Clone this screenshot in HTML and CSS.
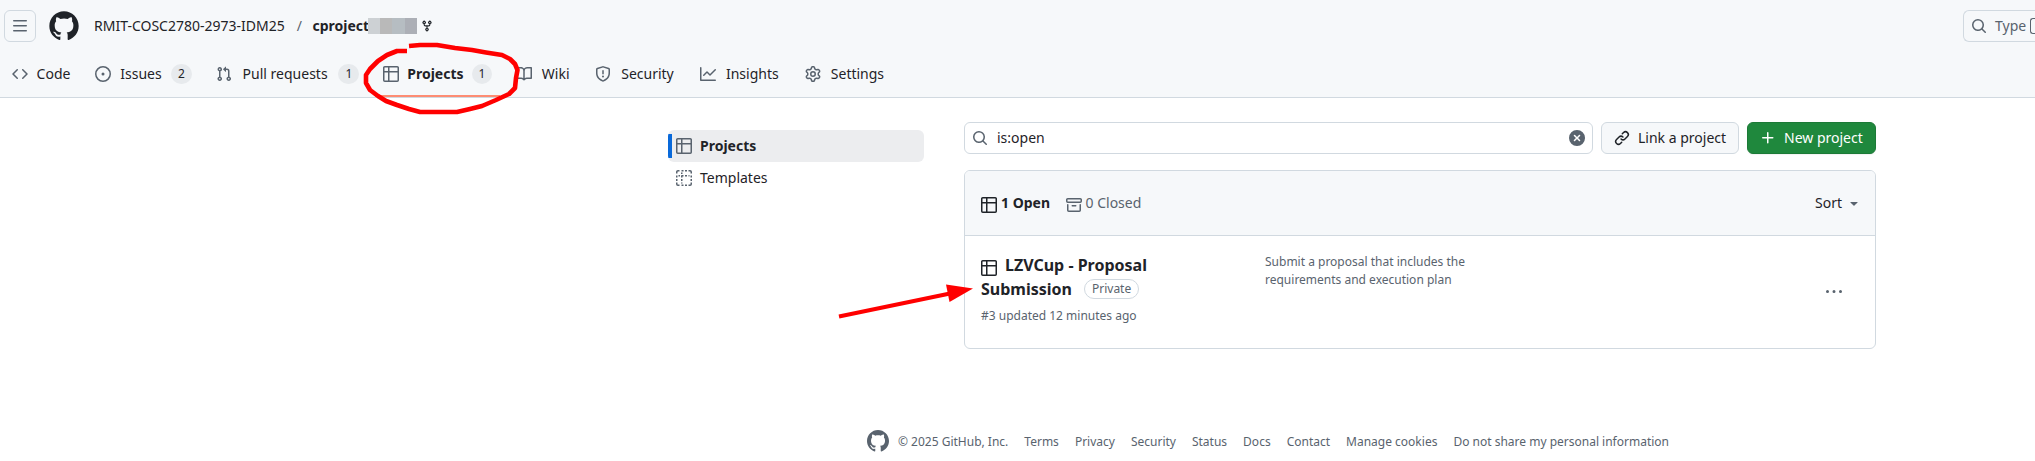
FILE: index.html
```html
<!DOCTYPE html>
<html lang="en">
<head>
<meta charset="utf-8">
<title>Projects</title>
<link rel="stylesheet" href="styles.css">
</head>
<body>
<svg class="sprite" aria-hidden="true">
  <symbol id="mark" viewBox="0 0 24 24"><path d="M12 1C5.9225 1 1 5.9225 1 12C1 16.8675 4.14875 20.9787 8.52125 22.4362C9.07125 22.5325 9.2775 22.2025 9.2775 21.9137C9.2775 21.6525 9.26375 20.7862 9.26375 19.865C6.5 20.3737 5.785 19.1912 5.565 18.5725C5.44125 18.2562 4.905 17.28 4.4375 17.0187C4.0525 16.8125 3.5025 16.3037 4.42375 16.29C5.29 16.2762 5.90875 17.0875 6.115 17.4175C7.105 19.0812 8.68625 18.6137 9.31875 18.325C9.415 17.61 9.70375 17.1287 10.02 16.8537C7.5725 16.5787 5.015 15.63 5.015 11.4225C5.015 10.2262 5.44125 9.23625 6.1425 8.46625C6.0325 8.19125 5.6475 7.06375 6.2525 5.55125C6.2525 5.55125 7.17375 5.2625 9.2775 6.67875C10.1575 6.43125 11.0925 6.3075 12.0275 6.3075C12.9625 6.3075 13.8975 6.43125 14.7775 6.67875C16.8813 5.24875 17.8025 5.55125 17.8025 5.55125C18.4075 7.06375 18.0225 8.19125 17.9125 8.46625C18.6138 9.23625 19.04 10.2125 19.04 11.4225C19.04 15.6437 16.4688 16.5787 14.0213 16.8537C14.42 17.1975 14.7638 17.8575 14.7638 18.8887C14.7638 20.36 14.75 21.5425 14.75 21.9137C14.75 22.2025 14.9563 22.5462 15.5063 22.4362C19.8513 20.9787 23 16.8537 23 12C23 5.9225 18.0775 1 12 1Z"/></symbol>
  <symbol id="table" viewBox="0 0 16 16"><path d="M0 1.75C0 .784.784 0 1.75 0h12.5C15.216 0 16 .784 16 1.75v12.5A1.75 1.75 0 0 1 14.25 16H1.75A1.75 1.75 0 0 1 0 14.25ZM6.5 6.5v8h7.75a.25.25 0 0 0 .25-.25V6.5Zm8-1.5V1.75a.25.25 0 0 0-.25-.25H6.5V5Zm-13 1.5v7.75c0 .138.112.25.25.25H5v-8ZM5 5V1.5H1.75a.25.25 0 0 0-.25.25V5Z"/></symbol>
  <symbol id="search" viewBox="0 0 16 16"><path d="M10.68 11.74a6 6 0 0 1-7.922-8.982 6 6 0 0 1 8.982 7.922l3.04 3.04a.749.749 0 0 1-.326 1.275.749.749 0 0 1-.734-.215ZM11.5 7a4.499 4.499 0 1 0-8.997 0A4.499 4.499 0 0 0 11.5 7Z"/></symbol>
</svg>

<header class="header">
  <div class="topbar">
    <button class="menu-btn"><svg class="icon" viewBox="0 0 16 16"><path d="M1 2.75A.75.75 0 0 1 1.75 2h12.5a.75.75 0 0 1 0 1.5H1.75A.75.75 0 0 1 1 2.75Zm0 5A.75.75 0 0 1 1.75 7h12.5a.75.75 0 0 1 0 1.5H1.75A.75.75 0 0 1 1 7.75ZM1.75 12h12.5a.75.75 0 0 1 0 1.5H1.75a.75.75 0 0 1 0-1.5Z"/></svg></button>
    <svg class="logo"><use href="#mark"/></svg>
    <div class="crumbs">
      <span>RMIT-COSC2780-2973-IDM25</span><span class="slash">/</span><b>cproject</b>
      <span class="mask"><i class="m1"></i><i class="m2"></i><i class="m3"></i><i class="m4"></i></span>
      <svg class="fork" viewBox="0 0 16 16"><path d="M5 5.372v.878c0 .414.336.75.75.75h4.5a.75.75 0 0 0 .75-.75v-.878a2.25 2.25 0 1 1 1.5 0v.878a2.25 2.25 0 0 1-2.25 2.25h-1.5v2.128a2.251 2.251 0 1 1-1.5 0V8.5h-1.5A2.25 2.25 0 0 1 3.5 6.25v-.878a2.25 2.25 0 1 1 1.5 0ZM5 3.25a.75.75 0 1 0-1.5 0 .75.75 0 0 0 1.5 0Zm6.75.75a.75.75 0 1 0 0-1.5.75.75 0 0 0 0 1.5Zm-3 8.75a.75.75 0 1 0-1.5 0 .75.75 0 0 0 1.5 0Z"/></svg>
    </div>
    <div class="global-search"><svg class="icon"><use href="#search"/></svg><span>Type</span><span class="kbd"></span></div>
  </div>
  <nav class="tabs">
    <a class="tab"><svg class="icon" viewBox="0 0 16 16"><path d="m11.28 3.22 4.25 4.25a.75.75 0 0 1 0 1.06l-4.25 4.25a.749.749 0 0 1-1.275-.326.749.749 0 0 1 .215-.734L13.94 8l-3.72-3.72a.749.749 0 0 1 .326-1.275.749.749 0 0 1 .734.215Zm-6.56 0a.751.751 0 0 1 1.042.018.751.751 0 0 1 .018 1.042L2.06 8l3.72 3.72a.749.749 0 0 1-.326 1.275.749.749 0 0 1-.734-.215L.47 8.53a.75.75 0 0 1 0-1.06Z"/></svg><span class="name" data-content="Code">Code</span></a>
    <a class="tab"><svg class="icon" viewBox="0 0 16 16"><path d="M8 9.5a1.5 1.5 0 1 0 0-3 1.5 1.5 0 0 0 0 3Z"/><path d="M8 0a8 8 0 1 1 0 16A8 8 0 0 1 8 0ZM1.5 8a6.5 6.5 0 1 0 13 0 6.5 6.5 0 0 0-13 0Z"/></svg><span class="name" data-content="Issues">Issues</span><span class="count">2</span></a>
    <a class="tab"><svg class="icon" viewBox="0 0 16 16"><path d="M1.5 3.25a2.25 2.25 0 1 1 3 2.122v5.256a2.251 2.251 0 1 1-1.5 0V5.372A2.25 2.25 0 0 1 1.5 3.25Zm5.677-.177L9.573.677A.25.25 0 0 1 10 .854V2.5h1A2.5 2.5 0 0 1 13.5 5v5.628a2.251 2.251 0 1 1-1.5 0V5a1 1 0 0 0-1-1h-1v1.646a.25.25 0 0 1-.427.177L7.177 3.427a.25.25 0 0 1 0-.354ZM3.75 2.5a.75.75 0 1 0 0 1.5.75.75 0 0 0 0-1.5Zm0 9.5a.75.75 0 1 0 0 1.5.75.75 0 0 0 0-1.5Zm8.25.75a.75.75 0 1 0 1.5 0 .75.75 0 0 0-1.5 0Z"/></svg><span class="name" data-content="Pull requests">Pull requests</span><span class="count">1</span></a>
    <a class="tab tab-active"><svg class="icon"><use href="#table"/></svg><span class="name" data-content="Projects">Projects</span><span class="count">1</span></a>
    <a class="tab"><svg class="icon" viewBox="0 0 16 16"><path d="M0 1.75A.75.75 0 0 1 .75 1h4.253c1.227 0 2.317.59 3 1.501A3.743 3.743 0 0 1 11.006 1h4.245a.75.75 0 0 1 .75.75v10.5a.75.75 0 0 1-.75.75h-4.507a2.25 2.25 0 0 0-1.591.659l-.622.621a.75.75 0 0 1-1.06 0l-.622-.621A2.25 2.25 0 0 0 5.258 13H.75a.75.75 0 0 1-.75-.75Zm7.251 10.324.004-5.073-.002-2.253A2.25 2.25 0 0 0 5.003 2.5H1.5v9h3.757a3.75 3.75 0 0 1 1.994.574ZM8.755 4.75l-.004 7.322a3.752 3.752 0 0 1 1.992-.572H14.5v-9h-3.495a2.25 2.25 0 0 0-2.25 2.25Z"/></svg><span class="name" data-content="Wiki">Wiki</span></a>
    <a class="tab"><svg class="icon" viewBox="0 0 16 16"><path d="M7.467.133a1.748 1.748 0 0 1 1.066 0l5.25 1.68A1.75 1.75 0 0 1 15 3.48V7c0 1.566-.32 3.182-1.303 4.682-.983 1.498-2.585 2.813-5.032 3.855a1.697 1.697 0 0 1-1.33 0c-2.447-1.042-4.049-2.357-5.032-3.855C1.32 10.182 1 8.566 1 7V3.48a1.75 1.75 0 0 1 1.217-1.667Zm.61 1.429a.25.25 0 0 0-.153 0l-5.25 1.68a.25.25 0 0 0-.174.238V7c0 1.358.275 2.666 1.057 3.86.784 1.194 2.121 2.34 4.366 3.297a.196.196 0 0 0 .154 0c2.245-.956 3.582-2.104 4.366-3.298C13.225 9.666 13.5 8.36 13.5 7V3.48a.251.251 0 0 0-.174-.237l-5.25-1.68ZM8.75 4.75v3a.75.75 0 0 1-1.5 0v-3a.75.75 0 0 1 1.5 0ZM9 10.5a1 1 0 1 1-2 0 1 1 0 0 1 2 0Z"/></svg><span class="name" data-content="Security">Security</span></a>
    <a class="tab"><svg class="icon" viewBox="0 0 16 16"><path d="M1.5 1.75V13.5h13.75a.75.75 0 0 1 0 1.5H.75a.75.75 0 0 1-.75-.75V1.75a.75.75 0 0 1 1.5 0Zm14.28 2.53-5.25 5.25a.75.75 0 0 1-1.06 0L7 7.06 4.28 9.78a.751.751 0 0 1-1.042-.018.751.751 0 0 1-.018-1.042l3.25-3.25a.75.75 0 0 1 1.06 0L10 7.94l4.72-4.72a.751.751 0 0 1 1.042.018.751.751 0 0 1 .018 1.042Z"/></svg><span class="name" data-content="Insights">Insights</span></a>
    <a class="tab"><svg class="icon" viewBox="0 0 16 16"><path d="M8 0a8.2 8.2 0 0 1 .701.031C9.444.095 9.99.645 10.16 1.29l.288 1.107c.018.066.079.158.212.224.231.114.454.243.668.386.123.082.233.09.299.071l1.103-.303c.644-.176 1.392.021 1.82.63.27.385.506.792.704 1.218.315.675.111 1.422-.364 1.891l-.814.806c-.049.048-.098.147-.088.294.016.257.016.515 0 .772-.01.147.038.246.088.294l.814.806c.475.469.679 1.216.364 1.891a7.977 7.977 0 0 1-.704 1.217c-.428.61-1.176.807-1.82.63l-1.102-.302c-.067-.019-.177-.011-.3.071a5.909 5.909 0 0 1-.668.386c-.133.066-.194.158-.211.224l-.29 1.106c-.168.646-.715 1.196-1.458 1.26a8.006 8.006 0 0 1-1.402 0c-.743-.064-1.289-.614-1.458-1.26l-.289-1.106c-.018-.066-.079-.158-.212-.224a5.738 5.738 0 0 1-.668-.386c-.123-.082-.233-.09-.299-.071l-1.103.303c-.644.176-1.392-.021-1.82-.63a8.12 8.12 0 0 1-.704-1.218c-.315-.675-.111-1.422.363-1.891l.815-.806c.05-.048.098-.147.088-.294a6.214 6.214 0 0 1 0-.772c.01-.147-.038-.246-.088-.294l-.815-.806C.635 6.045.431 5.298.746 4.623a7.92 7.92 0 0 1 .704-1.217c.428-.61 1.176-.807 1.82-.63l1.102.302c.067.019.177.011.3-.071.214-.143.437-.272.668-.386.133-.066.194-.158.211-.224l.29-1.106C6.009.645 6.556.095 7.299.03 7.53.01 7.764 0 8 0Zm-.571 1.525c-.036.003-.108.036-.137.146l-.289 1.105c-.147.561-.549.967-.998 1.189-.173.086-.34.183-.5.29-.417.278-.97.423-1.529.27l-1.103-.303c-.109-.03-.175.016-.195.045-.22.312-.412.644-.573.99-.014.031-.021.11.059.19l.815.806c.411.406.562.957.53 1.456a4.709 4.709 0 0 0 0 .582c.032.499-.119 1.05-.53 1.456l-.815.806c-.081.08-.073.159-.059.19.162.346.353.677.573.989.02.03.085.076.195.046l1.102-.303c.56-.153 1.113-.008 1.53.27.161.107.328.204.501.29.447.222.85.629.997 1.189l.289 1.105c.029.109.101.143.137.146a6.6 6.6 0 0 0 1.142 0c.036-.003.108-.036.137-.146l.289-1.105c.147-.561.549-.967.998-1.189.173-.086.34-.183.5-.29.417-.278.97-.423 1.529-.27l1.103.303c.109.029.175-.016.195-.045.22-.313.411-.644.573-.99.014-.031.021-.11-.059-.19l-.815-.806c-.411-.406-.562-.957-.53-1.456a4.709 4.709 0 0 0 0-.582c-.032-.499.119-1.05.53-1.456l.815-.806c.081-.08.073-.159.059-.19a6.464 6.464 0 0 0-.573-.989c-.02-.03-.085-.076-.195-.046l-1.102.303c-.56.153-1.113.008-1.53-.27a4.44 4.44 0 0 0-.501-.29c-.447-.222-.85-.629-.997-1.189l-.289-1.105c-.029-.11-.101-.143-.137-.146a6.6 6.6 0 0 0-1.142 0ZM11 8a3 3 0 1 1-6 0 3 3 0 0 1 6 0ZM9.5 8a1.5 1.5 0 1 0-3.001.001A1.5 1.5 0 0 0 9.5 8Z"/></svg><span class="name" data-content="Settings">Settings</span></a>
  </nav>
</header>

<main class="layout">
  <aside class="side">
    <a class="side-item side-current"><svg class="icon"><use href="#table"/></svg><b>Projects</b></a>
    <a class="side-item"><svg class="icon dashed" viewBox="0 0 16 16"><path d="M.75 3.500V2A1.250 1.250 0 0 1 2 .75h1.500M5.500.75h2M9 .75h2M12.500.75H14A1.250 1.250 0 0 1 15.250 2v1.500M15.250 5.500v2M15.250 9v2M15.250 12.500V14A1.250 1.250 0 0 1 14 15.250h-1.500M11 15.250H9M7.500 15.250h-2M3.500 15.250H2A1.250 1.250 0 0 1 .75 14v-1.500M.75 11V9M.75 7.500v-2M2.500 5.750h1.500M5.750 2.500v1.500M5.500 5.750h2M9 5.750h2M12.500 5.750h1M5.750 5.500v2M5.750 9v2M5.750 12.500v1"/></svg><span>Templates</span></a>
  </aside>
  <section class="content">
    <div class="tools">
      <div class="field"><svg class="icon"><use href="#search"/></svg><span class="query">is:open</span><svg class="icon" viewBox="0 0 16 16"><path d="M2.343 13.657A8 8 0 1 1 13.658 2.343 8 8 0 0 1 2.343 13.657ZM6.03 4.97a.751.751 0 0 0-1.042.018.751.751 0 0 0-.018 1.042L6.94 8 4.97 9.97a.749.749 0 0 0 .326 1.275.749.749 0 0 0 .734-.215L8 9.06l1.97 1.97a.749.749 0 0 0 1.275-.326.749.749 0 0 0-.215-.734L9.06 8l1.97-1.97a.749.749 0 0 0-.326-1.275.749.749 0 0 0-.734.215L8 6.94Z"/></svg></div>
      <button class="btn btn-link"><svg class="icon" viewBox="0 0 16 16"><path d="m7.775 3.275 1.25-1.25a3.5 3.5 0 1 1 4.95 4.95l-2.5 2.5a3.5 3.5 0 0 1-4.95 0 .751.751 0 0 1 .018-1.042.751.751 0 0 1 1.042-.018 1.998 1.998 0 0 0 2.83 0l2.5-2.5a2.002 2.002 0 0 0-2.83-2.83l-1.25 1.25a.751.751 0 0 1-1.042-.018.751.751 0 0 1-.018-1.042Zm-4.69 9.64a1.998 1.998 0 0 0 2.83 0l1.25-1.25a.751.751 0 0 1 1.042.018.751.751 0 0 1 .018 1.042l-1.25 1.25a3.5 3.5 0 1 1-4.95-4.95l2.5-2.5a3.5 3.5 0 0 1 4.95 0 .751.751 0 0 1-.018 1.042.751.751 0 0 1-1.042.018 1.998 1.998 0 0 0-2.83 0l-2.5 2.5a1.998 1.998 0 0 0 0 2.83Z"/></svg><span>Link a project</span></button>
      <button class="btn btn-new"><svg class="icon" viewBox="0 0 16 16"><path d="M7.75 2a.75.75 0 0 1 .75.75V7h4.25a.75.75 0 0 1 0 1.5H8.5v4.25a.75.75 0 0 1-1.5 0V8.5H2.75a.75.75 0 0 1 0-1.5H7V2.75A.75.75 0 0 1 7.75 2Z"/></svg><span>New project</span></button>
    </div>
    <div class="box">
      <div class="box-head">
        <div class="state state-on"><svg class="icon"><use href="#table"/></svg><b>1 Open</b></div>
        <div class="state"><svg class="icon" viewBox="0 0 16 16"><path d="M0 2.75C0 1.784.784 1 1.75 1h12.5c.966 0 1.75.784 1.75 1.75v1.5A1.75 1.75 0 0 1 14.25 6H1.75A1.75 1.75 0 0 1 0 4.25ZM1.75 7a.75.75 0 0 1 .75.75v5.5c0 .138.112.25.25.25h10.5a.25.25 0 0 0 .25-.25v-5.5a.75.75 0 0 1 1.5 0v5.5A1.75 1.75 0 0 1 13.25 15H2.75A1.75 1.75 0 0 1 1 13.25v-5.5A.75.75 0 0 1 1.75 7Zm0-4.5a.25.25 0 0 0-.25.25v1.5c0 .138.112.25.25.25h12.5a.25.25 0 0 0 .25-.25v-1.5a.25.25 0 0 0-.25-.25ZM6.25 8h3.5a.75.75 0 0 1 0 1.5h-3.5a.75.75 0 0 1 0-1.5Z"/></svg><span>0 Closed</span></div>
        <div class="sort"><span>Sort</span><svg class="icon" viewBox="0 0 16 16"><path d="m4.427 7.427 3.396 3.396a.25.25 0 0 0 .354 0l3.396-3.396A.25.25 0 0 0 11.396 7H4.604a.25.25 0 0 0-.177.427Z"/></svg></div>
      </div>
      <div class="row">
        <div class="row-main">
          <h2><svg class="icon"><use href="#table"/></svg>LZVCup - Proposal<br>Submission<span class="label">Private</span></h2>
          <p>#3 updated 12 minutes ago</p>
        </div>
        <p class="desc">Submit a proposal that includes the requirements and execution plan</p>
        <svg class="icon more" viewBox="0 0 16 16"><path d="M8 9a1.5 1.5 0 1 0 0-3 1.5 1.5 0 0 0 0 3ZM1.5 9a1.5 1.5 0 1 0 0-3 1.5 1.5 0 0 0 0 3Zm13 0a1.5 1.5 0 1 0 0-3 1.5 1.5 0 0 0 0 3Z"/></svg>
      </div>
    </div>
  </section>
</main>

<footer class="footer">
  <svg class="foot-logo"><use href="#mark"/></svg>
  <span>© 2025 GitHub, Inc.</span>
  <a>Terms</a><a>Privacy</a><a>Security</a><a>Status</a><a>Docs</a><a>Contact</a><a>Manage cookies</a><a>Do not share my personal information</a>
</footer>

<svg class="markup" viewBox="0 0 2035 461" aria-hidden="true">
  <path class="pen" d="M407 51H397L387 55L378 61L370 69L366 75V83L370 90L378 96L386 101L397 105L409 109L420 112H457L470 109L482 106L496 100L509 94L515 88L516 78L517.500 70L515 64L510 59L502 55L486 52.500L472 50L455 48L437 45H420L409 46"/>
  <path class="pen-arrow" d="M839 316.500L950 293.500"/>
  <path class="pen-head" d="M973 288.500L946 284.500L949.500 302Z"/>
</svg>
</body>
</html>
```
FILE: styles.css
```css
* { box-sizing: border-box; }
body {
  margin: 0;
  height: 461px;
  overflow: hidden;
  background: #fff;
  color: #1f2328;
  font: 14px/20px "Noto Sans", sans-serif;
}
h2, p { margin: 0; }
button { font: inherit; color: inherit; padding: 0; }
b { font-weight: 700; }
svg { fill: currentColor; flex: none; display: block; }
.sprite { display: none; }
.icon { width: 16px; height: 16px; color: #59636e; }

.header { height: 98px; background: #f6f8fa; border-bottom: 1px solid #d1d9e0; }
.topbar { display: flex; align-items: center; height: 50px; padding: 10px 0 8px 4px; overflow: hidden; }
.menu-btn {
  display: flex; align-items: center; justify-content: center;
  width: 32px; height: 32px; border: 1px solid #d1d9e0; border-radius: 6px; background: transparent;
}
.logo { width: 32px; height: 32px; margin-left: 12px; }
.crumbs { display: flex; align-items: center; margin-left: 14px; }
.slash { color: #59636e; margin: 0 10.500px 0 12px; }
.crumbs b { width: 55.500px; }
.mask { display: flex; height: 16px; }
.mask i { width: 12.25px; }
.m1 { background: #cdd1d4; }
.m2 { background: #b9b9b9; }
.m3 { background: #b6bdc2; }
.m4 { background: #acafb6; }
.fork { width: 12px; height: 12px; margin-left: 4px; }
.global-search {
  display: flex; align-items: center; flex: none;
  width: 72px; height: 32px; margin-left: auto; padding-left: 7px;
  border: 1px solid #d1d9e0; border-right: 0; border-radius: 6px 0 0 6px; color: #59636e;
}
.global-search .icon { margin-right: 8px; }
.kbd { flex: 1; height: 16px; margin-left: 4px; border: 1px solid #59636e; border-right: 0; border-radius: 3px 0 0 3px; }

.tabs { display: flex; height: 48px; gap: 8px; padding-left: 4px; }
.tab { display: flex; align-items: center; gap: 8px; padding: 0 8px; white-space: nowrap; }
.name { text-align: center; }
.name::before { content: attr(data-content); display: block; height: 0; visibility: hidden; font-weight: 700; }
.tab-active { font-weight: 700; box-shadow: inset 0 -2px #fd8c73; height: 47px; padding-top: 1px; }
.count {
  min-width: 20px; height: 20px; padding: 0 6px; border: 1px solid transparent; border-radius: 20px;
  background: #e7eaed; font-size: 12px; line-height: 18px; font-weight: 400; text-align: center;
}

.layout { display: flex; gap: 40px; padding: 24px 159px 0 668px; }
.side { width: 256px; flex: none; padding-top: 8px; }
.side-item { display: flex; align-items: center; gap: 8px; height: 32px; padding-left: 8px; border-radius: 6px; }
.side-current { background: linear-gradient(#0969da, #0969da) 0 4px / 4px 24px no-repeat #ecedef; }
.dashed { fill: none; stroke: currentColor; stroke-width: 1.5; }

.content { flex: 1; }
.tools { display: flex; gap: 8px; }
.field {
  display: flex; align-items: center; flex: 1; height: 32px; padding: 0 7px;
  border: 1px solid #d1d9e0; border-radius: 6px;
}
.query { flex: 1; margin-left: 9px; }
.btn {
  display: flex; align-items: center; gap: 8px; height: 32px; padding: 0 12px;
  border: 1px solid #d1d9e0; border-radius: 6px; font-weight: 400; white-space: nowrap;
}
.btn-link { width: 138px; background: #f6f8fa; }
.btn-new { width: 129px; background: #1f883d; border-color: #1c7a37; color: #fff; box-shadow: 0 1px 1px #1f23280f; }
.btn .icon { color: inherit; }

.box { height: 179px; margin-top: 16px; border: 1px solid #d1d9e0; border-radius: 6px; overflow: hidden; }
.box-head { display: flex; align-items: center; height: 65px; padding: 0 13px 0 16px; background: #f6f8fa; border-bottom: 1px solid #d1d9e0; }
.state { display: flex; gap: 4px; margin-right: 15.500px; color: #59636e; }
.state .icon { margin-top: 4px; }
.state-on, .state-on .icon { color: #1f2328; }
.sort { display: flex; align-items: center; gap: 4px; margin-left: auto; }

.row { display: flex; padding: 17px 33px 0 16px; }
.row-main { width: 284px; }
.row h2 { font-size: 16px; line-height: 24px; font-weight: 700; }
.row h2 .icon { display: inline-block; vertical-align: -5px; margin-right: 8px; color: #1f2328; }
.row p { font-size: 12px; line-height: 18px; color: #59636e; }
.row-main p { margin-top: 6px; }
.label {
  display: inline-block; height: 20px; margin-left: 12px; padding: 0 7px; vertical-align: 2px;
  border: 1px solid #d1d9e0; border-radius: 20px;
  font-size: 12px; line-height: 18px; font-weight: 400; color: #59636e;
}
.row .desc { width: 216px; }
.more { margin: 31px 0 0 auto; }

.footer { display: flex; align-items: center; height: 24px; margin-top: 80px; padding-left: 866px; gap: 16px; font-size: 12px; line-height: 18px; color: #59636e; white-space: nowrap; }
.footer span, .footer a { padding-top: 1px; }
.foot-logo { width: 24px; height: 24px; margin-right: -8px; }

.markup { position: absolute; left: 0; top: 0; width: 2035px; height: 461px; pointer-events: none; }
.pen { fill: none; stroke: #f00; stroke-width: 4.6; stroke-linejoin: round; }
.pen-arrow { fill: none; stroke: #f00; stroke-width: 4; }
.pen-head { fill: #f00; }
```
